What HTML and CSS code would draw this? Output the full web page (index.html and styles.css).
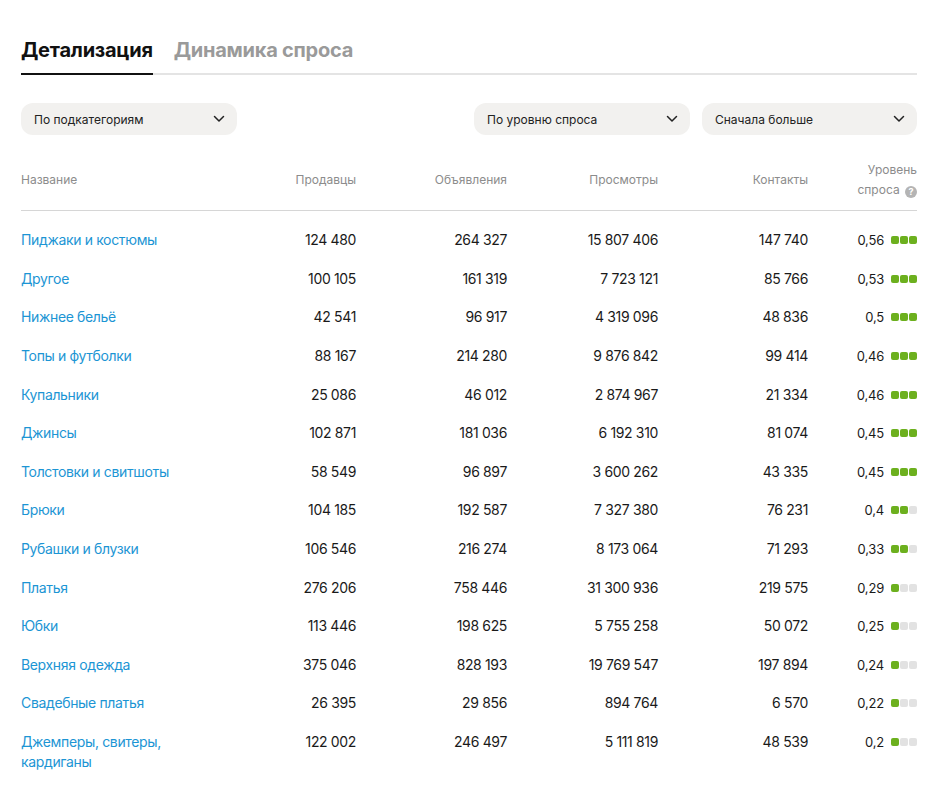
FILE: index.html
```html
<!DOCTYPE html>
<html lang="ru">
<head>
<meta charset="utf-8">
<link rel="stylesheet" href="styles.css">
</head>
<body>
<div class="page">
  <div class="tabs">
    <div class="tab active">Детализация</div>
    <div class="tab">Динамика спроса</div>
  </div>
  <div class="filters">
    <div class="select"><span>По подкатегориям</span><svg class="chev" width="12" height="8" viewBox="0 0 12 8"><path d="M1.5 1.5 6 6l4.5-4.5" fill="none" stroke="#222" stroke-width="1.5" stroke-linecap="round" stroke-linejoin="round"/></svg></div>
    <div class="spacer"></div>
    <div class="select"><span>По уровню спроса</span><svg class="chev" width="12" height="8" viewBox="0 0 12 8"><path d="M1.5 1.5 6 6l4.5-4.5" fill="none" stroke="#222" stroke-width="1.5" stroke-linecap="round" stroke-linejoin="round"/></svg></div>
    <div class="select"><span>Сначала больше</span><svg class="chev" width="12" height="8" viewBox="0 0 12 8"><path d="M1.5 1.5 6 6l4.5-4.5" fill="none" stroke="#222" stroke-width="1.5" stroke-linecap="round" stroke-linejoin="round"/></svg></div>
  </div>
  <div class="table">
    <div class="row head">
      <div class="c name">Название</div>
      <div class="c num">Продавцы</div>
      <div class="c num">Объявления</div>
      <div class="c num">Просмотры</div>
      <div class="c num">Контакты</div>
      <div class="c num">Уровень<br>спроса <span class="help">?</span></div>
    </div>
    <div class="body">
      <div class="row"><div class="c name">Пиджаки и костюмы</div><div class="c num">124 480</div><div class="c num">264 327</div><div class="c num">15 807 406</div><div class="c num">147 740</div><div class="c num lvl">0,56 <span class="dots"><i class="on"></i><i class="on"></i><i class="on"></i></span></div></div>
      <div class="row"><div class="c name">Другое</div><div class="c num">100 105</div><div class="c num">161 319</div><div class="c num">7 723 121</div><div class="c num">85 766</div><div class="c num lvl">0,53 <span class="dots"><i class="on"></i><i class="on"></i><i class="on"></i></span></div></div>
      <div class="row"><div class="c name">Нижнее бельё</div><div class="c num">42 541</div><div class="c num">96 917</div><div class="c num">4 319 096</div><div class="c num">48 836</div><div class="c num lvl">0,5 <span class="dots"><i class="on"></i><i class="on"></i><i class="on"></i></span></div></div>
      <div class="row"><div class="c name">Топы и футболки</div><div class="c num">88 167</div><div class="c num">214 280</div><div class="c num">9 876 842</div><div class="c num">99 414</div><div class="c num lvl">0,46 <span class="dots"><i class="on"></i><i class="on"></i><i class="on"></i></span></div></div>
      <div class="row"><div class="c name">Купальники</div><div class="c num">25 086</div><div class="c num">46 012</div><div class="c num">2 874 967</div><div class="c num">21 334</div><div class="c num lvl">0,46 <span class="dots"><i class="on"></i><i class="on"></i><i class="on"></i></span></div></div>
      <div class="row"><div class="c name">Джинсы</div><div class="c num">102 871</div><div class="c num">181 036</div><div class="c num">6 192 310</div><div class="c num">81 074</div><div class="c num lvl">0,45 <span class="dots"><i class="on"></i><i class="on"></i><i class="on"></i></span></div></div>
      <div class="row"><div class="c name">Толстовки и свитшоты</div><div class="c num">58 549</div><div class="c num">96 897</div><div class="c num">3 600 262</div><div class="c num">43 335</div><div class="c num lvl">0,45 <span class="dots"><i class="on"></i><i class="on"></i><i class="on"></i></span></div></div>
      <div class="row"><div class="c name">Брюки</div><div class="c num">104 185</div><div class="c num">192 587</div><div class="c num">7 327 380</div><div class="c num">76 231</div><div class="c num lvl">0,4 <span class="dots"><i class="on"></i><i class="on"></i><i></i></span></div></div>
      <div class="row"><div class="c name">Рубашки и блузки</div><div class="c num">106 546</div><div class="c num">216 274</div><div class="c num">8 173 064</div><div class="c num">71 293</div><div class="c num lvl">0,33 <span class="dots"><i class="on"></i><i class="on"></i><i></i></span></div></div>
      <div class="row"><div class="c name">Платья</div><div class="c num">276 206</div><div class="c num">758 446</div><div class="c num">31 300 936</div><div class="c num">219 575</div><div class="c num lvl">0,29 <span class="dots"><i class="on"></i><i></i><i></i></span></div></div>
      <div class="row"><div class="c name">Юбки</div><div class="c num">113 446</div><div class="c num">198 625</div><div class="c num">5 755 258</div><div class="c num">50 072</div><div class="c num lvl">0,25 <span class="dots"><i class="on"></i><i></i><i></i></span></div></div>
      <div class="row"><div class="c name">Верхняя одежда</div><div class="c num">375 046</div><div class="c num">828 193</div><div class="c num">19 769 547</div><div class="c num">197 894</div><div class="c num lvl">0,24 <span class="dots"><i class="on"></i><i></i><i></i></span></div></div>
      <div class="row"><div class="c name">Свадебные платья</div><div class="c num">26 395</div><div class="c num">29 856</div><div class="c num">894 764</div><div class="c num">6 570</div><div class="c num lvl">0,22 <span class="dots"><i class="on"></i><i></i><i></i></span></div></div>
      <div class="row"><div class="c name">Джемперы, свитеры, кардиганы</div><div class="c num">122 002</div><div class="c num">246 497</div><div class="c num">5 111 819</div><div class="c num">48 539</div><div class="c num lvl">0,2 <span class="dots"><i class="on"></i><i></i><i></i></span></div></div>
    </div>
  </div>
</div>
</body>
</html>
```

FILE: styles.css
```css
* { box-sizing: border-box; }
body {
  margin: 0;
  background: #fff;
  font-family: Inter, "Noto Sans", sans-serif;
  color: #1a1a1a;
}
.page {
  width: 896px;
  margin-left: 21px;
  padding-top: 36px;
}
.tabs {
  display: flex;
  gap: 21px;
  border-bottom: 2px solid #e4e4e4;
}
.tab {
  font-size: 20px;
  font-weight: 700;
  line-height: 28px;
  padding-bottom: 9px;
  color: #9a9a9a;
  letter-spacing: -0.25px;
}
.tab.active {
  color: #111;
  border-bottom: 2px solid #111;
  margin-bottom: -2px;
}
.filters {
  display: flex;
  gap: 12px;
  margin-top: 28px;
}
.spacer { flex: 1; }
.select {
  width: 216px;
  height: 32px;
  border-radius: 12px;
  background: #f2f1ef;
  display: flex;
  align-items: center;
  justify-content: space-between;
  padding: 0 12px 0 13px;
  font-size: 12px;
  color: #222;
}
.select + .select { width: 215px; }
.chev { display: block; }
.row {
  display: grid;
  grid-template-columns: 184px 151px 151px 151px 150px 109px;
  align-items: start;
}
.head {
  align-items: center;
  padding: 25px 0 10px;
  border-bottom: 1px solid #d6d6d6;
  color: #8c8c8c;
  font-size: 12px;
  line-height: 20px;
}
.c.num { text-align: right; }
.help {
  display: inline-block;
  width: 12px;
  height: 12px;
  border-radius: 50%;
  background: #b4b4b4;
  color: #fff;
  font-size: 9px;
  line-height: 12px;
  font-weight: 700;
  text-align: center;
  vertical-align: -1px;
  margin-left: 2px;
}
.body { padding-top: 10px; }
.body .row {
  font-size: 14px;
  line-height: 20px;
  padding: 9.3px 0;
  letter-spacing: -0.35px;
}
.body .name { color: #1c95d4; }
.lvl {
  display: flex;
  justify-content: flex-end;
  align-items: center;
  gap: 7px;
  font-size: 13px;
  letter-spacing: -0.2px;
}
.dots { display: flex; gap: 1px; }
.dots i {
  width: 8px;
  height: 8px;
  border-radius: 2px;
  background: #e2e2e2;
  display: block;
}
.dots i.on { background: #6cb01e; }
```
